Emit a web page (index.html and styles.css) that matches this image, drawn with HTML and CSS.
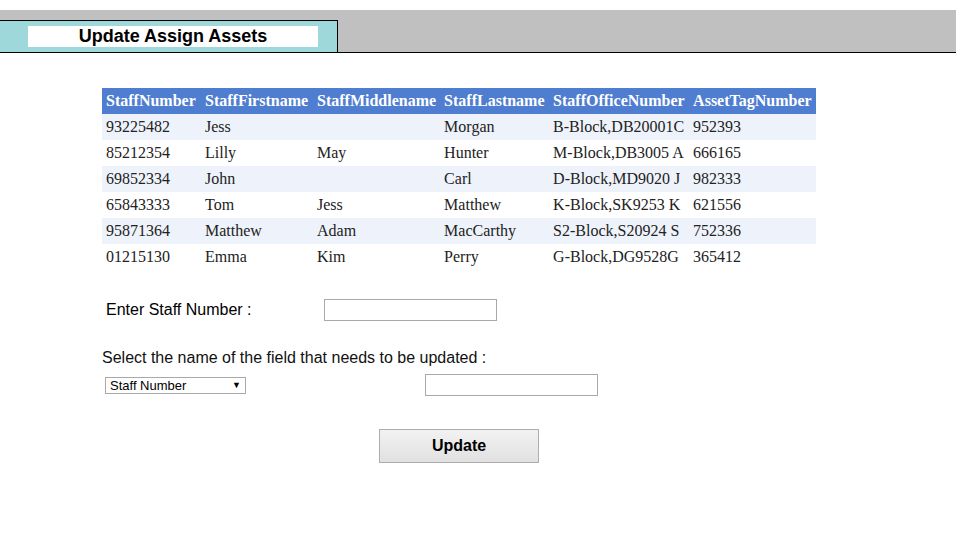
FILE: index.html
```html
<!DOCTYPE html>
<html>
<head>
<meta charset="utf-8">
<title>Update Assign Assets</title>
<link rel="stylesheet" href="styles.css">
</head>
<body>
<div class="topbar">
  <div class="tab"><div class="tab-title">Update Assign Assets</div></div>
</div>
<div class="content">
  <table class="assets">
    <thead>
      <tr><th class="c1">StaffNumber</th><th class="c2">StaffFirstname</th><th class="c3">StaffMiddlename</th><th class="c4">StaffLastname</th><th class="c5">StaffOfficeNumber</th><th class="c6">AssetTagNumber</th></tr>
    </thead>
    <tbody>
      <tr><td>93225482</td><td>Jess</td><td></td><td>Morgan</td><td>B-Block,DB20001C</td><td>952393</td></tr>
      <tr><td>85212354</td><td>Lilly</td><td>May</td><td>Hunter</td><td>M-Block,DB3005 A</td><td>666165</td></tr>
      <tr><td>69852334</td><td>John</td><td></td><td>Carl</td><td>D-Block,MD9020 J</td><td>982333</td></tr>
      <tr><td>65843333</td><td>Tom</td><td>Jess</td><td>Matthew</td><td>K-Block,SK9253 K</td><td>621556</td></tr>
      <tr><td>95871364</td><td>Matthew</td><td>Adam</td><td>MacCarthy</td><td>S2-Block,S20924 S</td><td>752336</td></tr>
      <tr><td>01215130</td><td>Emma</td><td>Kim</td><td>Perry</td><td>G-Block,DG9528G</td><td>365412</td></tr>
    </tbody>
  </table>

  <div class="form">
    <div class="row-staff">
      <span class="label-staff">Enter Staff Number :</span><input class="text-input" type="text">
    </div>
    <div class="select-label">Select the name of the field that needs to be updated :</div>
    <div class="row-field">
      <span class="select-wrap">
        <select class="field-select"><option>Staff Number</option></select>
        <span class="select-arrow">&#9660;</span>
      </span>
      <input class="text-input value-input" type="text">
    </div>
    <div class="row-button">
      <button class="update-btn" type="button">Update</button>
    </div>
  </div>
</div>
</body>
</html>
```

FILE: styles.css
```css
html, body {
  margin: 0;
  padding: 0;
  background: #ffffff;
}
body {
  font-family: "Liberation Sans", Arial, sans-serif;
  color: #000;
}
.topbar {
  margin-top: 10px;
  background: #c0c0c0;
  padding-top: 10px;
  border-bottom: 1px solid #000;
  display: flex;
}
.tab {
  background: #9ed8da;
  border-top: 1px solid #000;
  border-right: 1px solid #000;
  width: 309px;
  padding: 5px 0 5px 28px;
  height: 21px;
}
.tab-title {
  background: #fff;
  width: 290px;
  height: 21px;
  line-height: 21px;
  text-align: center;
  font-weight: bold;
  font-size: 18px;
}
.content {
  padding-left: 102px;
  padding-top: 35px;
}
.assets {
  border-collapse: collapse;
  font-family: "Liberation Serif", "Times New Roman", serif;
  font-size: 16px;
  color: #222;
}
.assets th {
  background: #4f7dd0;
  color: #fff;
  font-weight: bold;
  text-align: left;
  height: 26px;
  padding: 0 4px;
  white-space: nowrap;
}
.assets td {
  height: 26px;
  padding: 0 4px;
  white-space: nowrap;
}
.assets tbody tr:nth-child(odd) td {
  background: #eef3fb;
}
.c1 { width: 91px; }
.c2 { width: 104px; }
.c3 { width: 119px; }
.c4 { width: 101px; }
.c5 { width: 132px; }
.c6 { width: 119px; }

.form {
  font-size: 16px;
}
.row-staff {
  margin-top: 29px;
  padding-left: 4px;
  display: flex;
  align-items: center;
  height: 22px;
}
.label-staff {
  width: 218px;
}
.text-input {
  box-sizing: border-box;
  width: 173px;
  height: 22px;
  border: 1px solid #a9a9a9;
  margin: 0;
  padding: 0 2px;
  font-size: 13px;
}
.select-label {
  margin-top: 28px;
  height: 18px;
  line-height: 18px;
  color: #111;
}
.row-field {
  margin-top: 7px;
  display: flex;
  align-items: flex-start;
  height: 22px;
}
.select-wrap {
  position: relative;
  margin-left: 3px;
  margin-top: 3px;
  width: 141px;
  height: 17px;
}
.field-select {
  appearance: none;
  -webkit-appearance: none;
  box-sizing: border-box;
  display: block;
  width: 141px;
  height: 17px;
  margin: 0;
  border: 1px solid #a9a9a9;
  border-radius: 0;
  background: #fff;
  padding: 0 0 0 4px;
  font-family: "Liberation Sans", Arial, sans-serif;
  font-size: 13px;
  line-height: 15px;
  color: #000;
}
.select-arrow {
  position: absolute;
  right: 5px;
  top: 3px;
  font-size: 9px;
  line-height: 10px;
  color: #000;
}
.value-input {
  margin-left: 179px;
}
.row-button {
  margin-top: 33px;
  padding-left: 277px;
}
.update-btn {
  box-sizing: border-box;
  width: 160px;
  height: 34px;
  border: 1px solid #adadad;
  border-radius: 0;
  background: linear-gradient(#f2f2f2, #e1e1e1);
  font-family: "Liberation Sans", Arial, sans-serif;
  font-weight: bold;
  font-size: 16px;
  color: #000;
  padding: 0;
}
```
